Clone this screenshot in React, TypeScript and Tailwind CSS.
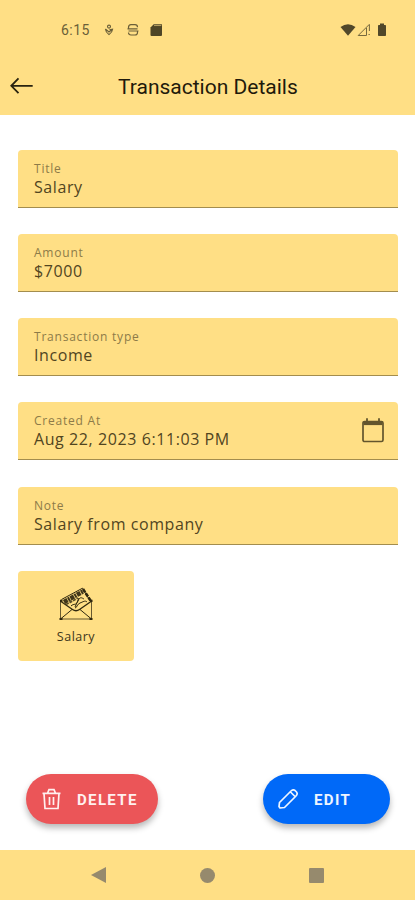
const fields = [
  { label: 'Title', value: 'Salary' },
  { label: 'Amount', value: '$7000' },
  { label: 'Transaction type', value: 'Income' },
  { label: 'Created At', value: 'Aug 22, 2023 6:11:03 PM', calendar: true },
  { label: 'Note', value: 'Salary from company' },
];

function StatusBar() {
  return (
    <div className="flex h-[60px] items-center pl-[61px] pr-[28px] text-[#6b5f38]">
      <span className="w-[43px] font-['Roboto',sans-serif] text-[14px] leading-none tracking-[0.45px]">6:15</span>
      <svg className="h-3.5 w-2.5" viewBox="0 0 10 14" fill="none" stroke="currentColor" strokeWidth="1.1">
        <circle cx="5" cy="3.6" r="1.5" />
        <path d="M1.4 6 5 9 8.6 6.2M1.4 6Q1.6 9 5 11.6 8.4 9 8.6 6.2L5.4 6.8" />
      </svg>
      <svg className="ml-[13px] h-3.5 w-3" viewBox="0 0 12 14" fill="none" stroke="currentColor" strokeWidth="1.2">
        <path d="M1.5 5.8V4.5Q1.5 1.7 4 1.7H8Q10.5 1.7 10.5 4.2M.5 5.8H10.5M1.5 8H11.5M10.5 8V9.5Q10.5 12 8 12H4Q1.5 12 1.5 9.5" />
      </svg>
      <svg className="ml-[11px] h-3.5 w-3" viewBox="0 0 12 14">
        <path d="M4 1H11Q12 1 12 2V12Q12 13 11 13H1.5Q.5 13 .5 12V4.5Z" fill="#4e4526" />
        <path d="M4 2.3H11.3" stroke="#b19b5d" strokeWidth="1.5" />
      </svg>
      <svg className="ml-auto h-3.5 w-4" viewBox="0 0 16 14">
        <path d="M.5 4Q8-1.5 15.5 4L8 12.7Z" fill="#51482a" />
      </svg>
      <svg className="ml-px h-3.5 w-3.5" viewBox="0 0 14 14" fill="none" stroke="#76693e" strokeWidth="1">
        <path d="M12.4 1.5V8M9.5 12.5H1.2L12.4 1.3M9.5 5V12.5M11.5 11.5H12.8" />
      </svg>
      <svg className="ml-[6px] h-3.5 w-2.5" viewBox="0 0 10 14">
        <path d="M3 .5H7V2H8.2Q9 2 9 2.8V12.2Q9 13 8.2 13H1.8Q1 13 1 12.2V2.8Q1 2 1.8 2H3Z" fill="#51482a" />
      </svg>
    </div>
  );
}

function CalendarIcon() {
  return (
    <svg className="h-[25px] w-[22px]" viewBox="0 0 22 25" fill="none" stroke="#63552d" strokeWidth="1.7">
      <rect x="1" y="3.5" width="20" height="20" rx="1.6" />
      <path d="M1.5 5.3H20.5" strokeWidth="3.6" />
      <path d="M5 .3V4M17 .3V4" strokeWidth="1.8" />
    </svg>
  );
}

function MoneyEnvelope() {
  return (
    <svg className="h-[34px] w-[34px]" viewBox="0 0 34 34" fill="none" stroke="#30280f" strokeWidth="1">
      <path d="M1.5 14V32H32.5V14" strokeWidth="1" stroke="#675930" />
      <path d="M2 14.5 13.5 22.5Q17 25 20.5 22.5L32 14.5" strokeWidth="1.3" />
      <path d="M1.5 32 13 22.5M32.5 32 21 22.5" />
      <path d="M2.5 12.5 23.5 1.2 31.5 14.5" />
      <path d="M5 15 24 4.5" strokeWidth="4.5" strokeDasharray="4 .7 2 .7" stroke="#40361a" />
      <path d="M7 17.5 19 11" strokeWidth="1.8" strokeDasharray="3 1" stroke="#5c4f28" />
      <path d="M24 2 31.5 13.5" strokeWidth="2.6" strokeDasharray="4 1" />
      <path d="M12 19C15 16 17 19 19 14S23 11 25 12M16 21C18 21 18 17 21 16S26 13 28 15M16 20 20 11" />
      <path d="M.5 32H3.5M30.5 32H33.5M1 13.8H3.5M31 13.8H33.5" strokeWidth="2.2" />
    </svg>
  );
}

export default function App() {
  return (
    <div className="flex h-[900px] w-[415px] flex-col overflow-hidden bg-white font-['Open_Sans',sans-serif]">
      {/* Header */}
      <header className="h-[115px] shrink-0 bg-[#ffdf85]">
        <StatusBar />
        <div className="flex h-[52px] items-center pl-2.5">
          <button className="w-[108px]" aria-label="Back">
            <svg className="h-5 w-6" viewBox="0 0 24 20" fill="none" stroke="#29230f" strokeWidth="1.8">
              <path d="M22.7 9.8H1.5M8.5 2.4 1.3 9.8 8.5 17.2" />
            </svg>
          </button>
          <h1 className="whitespace-nowrap pt-0.5 font-['Roboto',sans-serif] text-[21px] leading-none text-[#1f1a0b]">
            Transaction Details
          </h1>
        </div>
      </header>

      {/* Details */}
      <main className="flex-1 pl-[18px] pr-[17px] pt-[35px]">
        <div className="flex flex-col gap-[26.15px]">
          {fields.map((field) => (
            <div
              key={field.label}
              className="flex h-[58px] items-center justify-between rounded-t-[4px] border-b border-[#a38d4e] bg-[#ffdf85] pl-4 pr-3.5"
            >
              <div className="whitespace-nowrap">
                <div className="text-[12px] leading-[17px] tracking-[0.78px] text-[#8d7b48]">{field.label}</div>
                <div className="text-[16px] leading-[20px] tracking-[0.58px] text-[#51451f]">{field.value}</div>
              </div>
              {field.calendar && <CalendarIcon />}
            </div>
          ))}
        </div>

        {/* Category */}
        <div className="mt-[26.4px] flex h-[90px] w-[116px] flex-col items-center rounded-[4px] bg-[#ffdf85] pt-4">
          <MoneyEnvelope />
          <span className="mt-[7px] text-[12.5px] font-medium leading-[18px] tracking-[0.5px] text-[#40371b]">Salary</span>
        </div>
      </main>

      {/* Actions */}
      <div className="flex h-[76px] shrink-0 justify-between pl-[26px] pr-[25px] font-['Roboto',sans-serif] text-[15px] font-bold tracking-[1.35px] text-white">
        <button className="flex h-[50px] w-[132px] items-center rounded-full bg-[#eb5558] pl-4 shadow-[0_4px_6px_rgba(0,0,0,0.28)]">
          <svg className="h-[22px] w-[19px]" viewBox="0 0 19 22" fill="none" stroke="#fff0ef" strokeWidth="1.7">
            <path d="M.5 5.3H18.5M2 5.3 3 20.5H16L17 5.3M5.5 5.3 7 1.6H12L13.5 5.3M7.5 9V17M11.5 9V17" />
          </svg>
          <span className="ml-4 pt-0.5 text-[#fff0ef]">DELETE</span>
        </button>
        <button className="flex h-[50px] w-[127px] items-center rounded-full bg-[#0069f8] pl-[15px] shadow-[0_4px_6px_rgba(0,0,0,0.28)]">
          <svg className="h-5 w-5" viewBox="0 0 20 20" fill="none" stroke="#edf5ff" strokeWidth="1.7" strokeLinejoin="round">
            <path d="M1 17.5 1.5 13.5 13 2Q15 0 17 1.5L18.5 3Q20 5 18 7L6.5 18.5 2 19ZM12.5 3 17 7.5" />
          </svg>
          <span className="ml-4 pt-0.5 text-[#edf5ff]">EDIT</span>
        </button>
      </div>

      {/* Navigation bar */}
      <nav className="flex h-[50px] shrink-0 items-center justify-between bg-[#ffdf85] px-[91px]">
        <svg className="h-4 w-[15px]" viewBox="0 0 15 16" fill="#968a6d">
          <path d="M15 0V16L0 8Z" />
        </svg>
        <div className="h-[15px] w-[15px] rounded-full bg-[#968a6d]" />
        <div className="h-[15px] w-[15px] rounded-[1px] bg-[#968a6d]" />
      </nav>
    </div>
  );
}
